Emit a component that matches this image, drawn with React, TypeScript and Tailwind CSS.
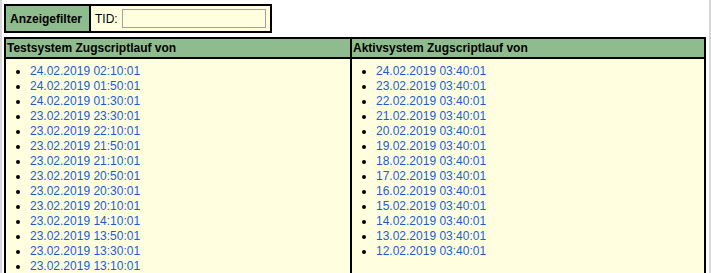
const testLaeufe = [
  '24.02.2019 02:10:01',
  '24.02.2019 01:50:01',
  '24.02.2019 01:30:01',
  '23.02.2019 23:30:01',
  '23.02.2019 22:10:01',
  '23.02.2019 21:50:01',
  '23.02.2019 21:10:01',
  '23.02.2019 20:50:01',
  '23.02.2019 20:30:01',
  '23.02.2019 20:10:01',
  '23.02.2019 14:10:01',
  '23.02.2019 13:50:01',
  '23.02.2019 13:30:01',
  '23.02.2019 13:10:01',
];

const aktivLaeufe = [
  '24.02.2019 03:40:01',
  '23.02.2019 03:40:01',
  '22.02.2019 03:40:01',
  '21.02.2019 03:40:01',
  '20.02.2019 03:40:01',
  '19.02.2019 03:40:01',
  '18.02.2019 03:40:01',
  '17.02.2019 03:40:01',
  '16.02.2019 03:40:01',
  '15.02.2019 03:40:01',
  '14.02.2019 03:40:01',
  '13.02.2019 03:40:01',
  '12.02.2019 03:40:01',
];

function LaufListe({ items }: { items: string[] }) {
  return (
    <ul className="list-disc pl-[24px] pt-[5px] pb-[12px]">
      {items.map((t) => (
        <li key={t} className="leading-[15px] marker:text-black">
          <a href="#" className="text-[#1a5cd6]">{t}</a>
        </li>
      ))}
    </ul>
  );
}

export default function App() {
  return (
    <div className="w-[711px] h-[273px] overflow-hidden bg-white border-x-2 border-[#d8d8d8] font-['Liberation_Sans',Arial,sans-serif] text-[12px] text-black">
      {/* Filter */}
      <div className="ml-[2px] mt-[4px] flex w-[268px] h-[29px] border-2 border-black">
        <div className="w-[85px] bg-[#8fbc8f] border-r-2 border-black flex items-center pl-[4px] font-bold">
          Anzeigefilter
        </div>
        <div className="flex-1 bg-[#ffffe0] flex items-center pl-[4px] gap-[4px]">
          <span>TID:</span>
          <input className="w-[144px] h-[19px] bg-[#ffffe0] border border-[#a0a0a0] outline-none" />
        </div>
      </div>

      {/* Zugscriptläufe */}
      <div className="ml-[2px] mt-[4px] w-[702px] border-2 border-black grid grid-cols-[344px_352px] gap-x-[2px] bg-black">
        <div className="bg-[#8fbc8f] h-[18px] leading-[18px] pl-[1px] font-bold">Testsystem Zugscriptlauf von</div>
        <div className="bg-[#8fbc8f] h-[18px] leading-[18px] pl-[1px] font-bold">Aktivsystem Zugscriptlauf von</div>
        <div className="bg-[#ffffe0] mt-[2px]">
          <LaufListe items={testLaeufe} />
        </div>
        <div className="bg-[#ffffe0] mt-[2px]">
          <LaufListe items={aktivLaeufe} />
        </div>
      </div>
    </div>
  );
}
